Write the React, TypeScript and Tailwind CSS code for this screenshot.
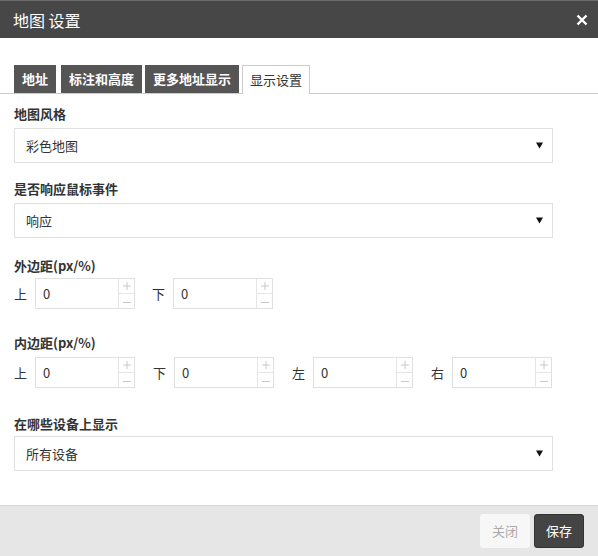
import { useState } from 'react'

const font = { fontFamily: '"Noto Sans CJK SC", "Microsoft YaHei", sans-serif' }

const tabs = ['地址', '标注和高度', '更多地址显示', '显示设置']

function Caret() {
  return (
    <svg width="7" height="7" viewBox="0 0 7 7" className="shrink-0">
      <path d="M0 0.5 H7 L3.5 6.5 Z" fill="#111" />
    </svg>
  )
}

function Select({ value }: { value: string }) {
  return (
    <div className="flex h-[35px] w-[539px] items-center justify-between border border-[#e0e0e0] bg-white pl-[11px] pr-[9px] text-[13px] text-[#333]">
      <span>{value}</span>
      <Caret />
    </div>
  )
}

function NumberField({ label }: { label: string }) {
  return (
    <div className="flex items-center">
      <span className="w-[21px] text-[13px] text-[#333]">{label}</span>
      <div className="flex h-[31px] w-[100px] border border-[#e0e0e0] bg-white">
        <div className="flex flex-1 items-center pl-[7px] text-[13px] text-[#333]">0</div>
        <div className="flex w-[16px] flex-col border-l border-[#e5e5e5]">
          <div className="flex flex-1 items-center justify-center border-b border-[#e5e5e5]">
            <svg width="8" height="8" viewBox="0 0 8 8">
              <path d="M0 4 H8 M4 0 V8" stroke="#c8c8c8" strokeWidth="1" />
            </svg>
          </div>
          <div className="flex flex-1 items-center justify-center">
            <svg width="8" height="8" viewBox="0 0 8 8">
              <path d="M0 5.5 H8" stroke="#c8c8c8" strokeWidth="1" />
            </svg>
          </div>
        </div>
      </div>
    </div>
  )
}

export default function App() {
  const [tab, setTab] = useState(3)

  return (
    <div className="flex h-[556px] w-[598px] flex-col bg-white" style={font}>
      <div className="flex h-[38px] items-center justify-between border-t border-[#6a6a6a] bg-[#474747] pl-[13px] pr-[10px]">
        <span className="text-[16px] text-white">地图 设置</span>
        <svg width="12" height="12" viewBox="0 0 12 12">
          <path d="M1.5 1.5 L10.5 10.5 M10.5 1.5 L1.5 10.5" stroke="#fff" strokeWidth="2.4" />
        </svg>
      </div>

      <div className="mt-[27px] flex gap-[3px] border-b border-[#cccccc] pl-[14px]">
        {tabs.map((t, i) =>
          i === tab ? (
            <button
              key={t}
              onClick={() => setTab(i)}
              className="-mb-px h-[29px] border border-b-0 border-[#cccccc] bg-white px-[7px] text-[13px] text-[#333]"
            >
              {t}
            </button>
          ) : (
            <button
              key={t}
              onClick={() => setTab(i)}
              className={`h-[28px] bg-[#555555] px-[8px] text-[13px] font-bold text-white ${i === 0 ? 'mr-[2px]' : ''}`}
            >
              {t}
            </button>
          ),
        )}
      </div>

      <div className="flex flex-1 flex-col px-[14px]">
        <div className="mt-[12px] text-[13px] leading-[16px] font-bold text-[#333]">地图风格</div>
        <div className="mt-[6px]">
          <Select value="彩色地图" />
        </div>

        <div className="mt-[18px] text-[13px] leading-[16px] font-bold text-[#333]">是否响应鼠标事件</div>
        <div className="mt-[6px]">
          <Select value="响应" />
        </div>

        <div className="mt-[20px] text-[13px] leading-[16px] font-bold text-[#333]">外边距(px/%)</div>
        <div className="mt-[4px] flex gap-[17px]">
          <NumberField label="上" />
          <NumberField label="下" />
        </div>

        <div className="mt-[26px] text-[13px] leading-[16px] font-bold text-[#333]">内边距(px/%)</div>
        <div className="mt-[6px] flex gap-[18px]">
          <NumberField label="上" />
          <NumberField label="下" />
          <NumberField label="左" />
          <NumberField label="右" />
        </div>

        <div className="mt-[28px] text-[13px] leading-[16px] font-bold text-[#333]">在哪些设备上显示</div>
        <div className="mt-[4px]">
          <Select value="所有设备" />
        </div>
      </div>

      <div className="flex h-[51px] items-center justify-end gap-[4px] border-t border-[#d8d8d8] bg-[#e6e6e6] pr-[14px]">
        <button className="h-[34px] w-[50px] rounded-[3px] bg-[#f7f7f7] text-[13px] text-[#aaa]">关闭</button>
        <button className="h-[34px] w-[50px] rounded-[3px] border border-[#333] bg-[#444] text-[13px] text-white">保存</button>
      </div>
    </div>
  )
}
